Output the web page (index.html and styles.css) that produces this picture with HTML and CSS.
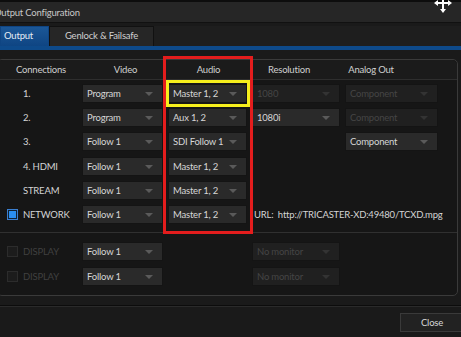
FILE: index.html
```html
<!DOCTYPE html>
<html lang="en">

<head>
    <meta charset="UTF-8">
    <title>Output Configuration</title>
    <link rel="stylesheet" href="styles.css">
</head>

<body>
    <div class="window">
        <div class="titlebar">Output Configuration</div>
        <div class="tabs">
            <div class="tab active">Output</div>
            <div class="tab">Genlock &amp; Failsafe</div>
        </div>
        <div class="tabline"></div>

        <div class="content">
            <div class="panel">
                <div class="head">
                    <span>Connections</span>
                    <span>Video</span>
                    <span>Audio</span>
                    <span>Resolution</span>
                    <span>Analog Out</span>
                </div>

                <div class="rows">
                    <div class="row">
                        <div class="conn">1.</div>
                        <div class="sel">Program</div>
                        <div class="sel">Master 1, 2</div>
                        <div class="sel off">1080</div>
                        <div class="sel off">Component</div>
                    </div>
                    <div class="row">
                        <div class="conn">2.</div>
                        <div class="sel">Program</div>
                        <div class="sel">Aux 1, 2</div>
                        <div class="sel">1080i</div>
                        <div class="sel off">Component</div>
                    </div>
                    <div class="row">
                        <div class="conn">3.</div>
                        <div class="sel">Follow 1</div>
                        <div class="sel">SDI Follow 1</div>
                        <div></div>
                        <div class="sel">Component</div>
                    </div>
                    <div class="row">
                        <div class="conn">4. HDMI</div>
                        <div class="sel">Follow 1</div>
                        <div class="sel">Master 1, 2</div>
                    </div>
                    <div class="row">
                        <div class="conn">STREAM</div>
                        <div class="sel">Follow 1</div>
                        <div class="sel">Master 1, 2</div>
                    </div>
                    <div class="row">
                        <div class="conn"><span class="check on"></span>NETWORK</div>
                        <div class="sel">Follow 1</div>
                        <div class="sel">Master 1, 2</div>
                        <div class="url">URL:&nbsp; http://TRICASTER-XD:49480/TCXD.mpg</div>
                    </div>
                </div>

                <div class="rows displays">
                    <div class="row">
                        <div class="conn dim"><span class="check"></span>DISPLAY</div>
                        <div class="sel">Follow 1</div>
                        <div></div>
                        <div class="sel off">No monitor</div>
                    </div>
                    <div class="row">
                        <div class="conn dim"><span class="check"></span>DISPLAY</div>
                        <div class="sel">Follow 1</div>
                        <div></div>
                        <div class="sel off">No monitor</div>
                    </div>
                </div>
            </div>
        </div>

        <div class="footer">
            <div class="btn">Close</div>
        </div>

        <!-- annotation boxes drawn over the screenshot -->
        <div class="mark red"></div>
        <div class="mark yellow"></div>

        <svg class="cursor" width="20" height="16" viewBox="0 0 20 16">
            <path d="M10 -2 L10 13 M3 5 L17 5" stroke="#fff" stroke-width="2" fill="none" />
            <path d="M1 5 L5 2 L5 8 Z M19 5 L15 2 L15 8 Z M10 15 L7 11 L13 11 Z" fill="#fff" />
        </svg>
    </div>
</body>

</html>
```

FILE: styles.css
```css
* {
    padding: 0px;
    margin: 0px;
    box-sizing: border-box;
}

body {
    background-color: #1a1a1a;
    font-family: Lato, "Open Sans", sans-serif;
    font-size: 9.5px;
    letter-spacing: -0.2px;
    color: #cfcfcf;
}

.window {
    position: relative;
    width: 461px;
    height: 337px;
    overflow: hidden;
    background-color: #1a1a1a;
}

.titlebar {
    height: 23px;
    line-height: 21px;
    margin-left: -6px;
    background-color: #262626;
    border-top: 2px solid #0d0d0d;
    border-bottom: 1px solid #111;
    color: #c8c8c8;
}

.tabs {
    display: flex;
    height: 20px;
    margin-top: 3px;
    background-color: #1e1e1e;
}

.tab {
    width: 105px;
    height: 20px;
    line-height: 18px;
    text-align: center;
    background-color: #262626;
    border: 1px solid #111;
    border-bottom: none;
    color: #cfcfcf;
}

.tab.active {
    width: 49px;
    padding-left: 3px;
    text-align: left;
    background: linear-gradient(#1b5797, #0f4583);
    border-color: #0f4583;
    color: #e4ecf5;
}

.tabline {
    height: 4px;
    background-color: #0e4a8a;
}

.content {
    padding: 9px 3px 0px 0px;
    height: 256px;
    border-bottom: 1px solid #0c0c0c;
}

.panel {
    margin-left: -3px;
    height: 237px;
    border: 1px solid #3a3a3a;
    border-radius: 5px;
    background-color: #161616;
}

.head {
    display: grid;
    grid-template-columns: 86px 83px 83px 78px 86px;
    height: 20px;
    line-height: 20px;
    text-align: center;
    border-bottom: 1px solid #2e2e2e;
    background-color: #1b1b1b;
    border-radius: 5px 5px 0px 0px;
}

.rows {
    padding: 1px 0px 5px;
    border-bottom: 1px solid #303030;
}

.rows.displays {
    padding: 7px 0px 0px;
    border-bottom: none;
}

.row {
    display: grid;
    grid-template-columns: 79px 81px 79px 88px 93px;
    column-gap: 5px;
    align-items: center;
    height: 24.3px;
}

.conn {
    display: flex;
    align-items: center;
    padding-left: 25px;
    color: #d4d4d4;
}

.conn.dim {
    color: #404040;
}

.check {
    width: 11px;
    height: 11px;
    margin-left: -16px;
    margin-right: 5px;
    border: 1px solid #2c2c2c;
    background-color: #1c1c1c;
}

.check.on {
    border: 1px solid #3b7fd0;
    background-color: #2a8ef0;
    box-shadow: inset 0px 0px 0px 1px #123;
}

.sel {
    position: relative;
    height: 19px;
    line-height: 18px;
    padding-left: 4px;
    background-color: #2a2a2a;
    border: 1px solid #141414;
    color: #d6d6d6;
}

.sel::after {
    content: "";
    position: absolute;
    right: 9px;
    top: 7px;
    border-left: 4px solid transparent;
    border-right: 4px solid transparent;
    border-top: 4px solid #5a5a5a;
}

.sel.off {
    background-color: #202020;
    color: #454545;
}

.sel.off::after {
    border-top-color: #333;
}

.url {
    grid-column: 4 / span 2;
    margin-left: 2px;
    white-space: nowrap;
    color: #d4d4d4;
}

.footer {
    display: flex;
    justify-content: flex-end;
    padding-top: 6px;
    border-top: 1px solid #2a2a2a;
}

.btn {
    width: 64px;
    height: 19px;
    line-height: 17px;
    margin-right: -3px;
    text-align: center;
    background-color: #222;
    border: 1px solid #3a3a3a;
    color: #d8d8d8;
}

.mark {
    position: absolute;
}

.mark.red {
    left: 163px;
    top: 56px;
    width: 90px;
    height: 178px;
    border: 3px solid #e41d1d;
}

.mark.yellow {
    left: 166px;
    top: 80px;
    width: 84px;
    height: 27px;
    border: 3px solid #f5ee1c;
}

.cursor {
    position: absolute;
    left: 433px;
    top: -2px;
}
```
